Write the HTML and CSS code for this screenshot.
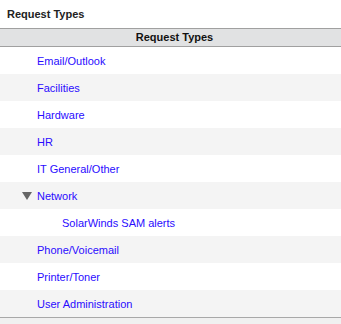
FILE: index.html
```html
<!DOCTYPE html>
<html lang="en">
  <head>
    <meta charset="UTF-8" />
    <title>Request Types</title>
    <link rel="stylesheet" href="styles.css">
  </head>
  <body>
    <div class="panel">
      <div class="panel-title">Request Types</div>
      <div class="grid">
        <div class="grid-header">Request Types</div>
        <div class="row"><a class="item">Email/Outlook</a></div>
        <div class="row alt"><a class="item">Facilities</a></div>
        <div class="row"><a class="item">Hardware</a></div>
        <div class="row alt"><a class="item">HR</a></div>
        <div class="row"><a class="item">IT General/Other</a></div>
        <div class="row alt">
          <svg class="toggle" width="10" height="8" viewBox="0 0 10 8"><polygon points="0,0 10,0 5,8" fill="#666" /></svg>
          <a class="item">Network</a>
        </div>
        <div class="row child"><a class="item">SolarWinds SAM alerts</a></div>
        <div class="row alt"><a class="item">Phone/Voicemail</a></div>
        <div class="row"><a class="item">Printer/Toner</a></div>
        <div class="row alt"><a class="item">User Administration</a></div>
      </div>
    </div>
  </body>
</html>
```
FILE: styles.css
```css
body {
  margin: 0;
  background: #f0f0f0;
  font-family: "Liberation Sans", Arial, sans-serif;
  font-size: 11px;
}
.panel {
  background: white;
}
.panel-title {
  height: 28px;
  line-height: 28px;
  padding-left: 7px;
  font-weight: bold;
  color: #222;
}
.grid-header {
  height: 17px;
  line-height: 17px;
  border-top: 1px solid #a0a0a0;
  border-bottom: 1px solid #a0a0a0;
  background: #e1e2e3;
  text-align: center;
  padding-left: 8px;
  font-weight: bold;
  color: #111;
}
.row {
  display: flex;
  align-items: center;
  height: 27px;
  padding-left: 37px;
  background: white;
}
.row.alt {
  background: #f4f4f4;
}
.row.child {
  padding-left: 62px;
}
.toggle {
  margin-left: -15px;
  margin-right: 5px;
}
.item {
  color: #2a0cff;
  cursor: pointer;
}
.grid {
  border-bottom: 1px solid #a8a8a8;
}
```
